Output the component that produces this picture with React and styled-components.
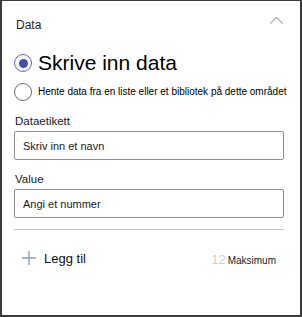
import React, { useState } from 'react'
import styled, { createGlobalStyle } from 'styled-components'

const GlobalStyle = createGlobalStyle`
  html, body {
    margin: 0;
    padding: 0;
    background: #ffffff;
  }
  body {
    font-family: "Liberation Sans", Arial, sans-serif;
    color: #000000;
  }
`

export default function App() {
  const [mode, setMode] = useState('manual')

  return (
    <>
      <GlobalStyle />
      <Panel>
        <Header>
          <Title>Data</Title>
          <Chevron viewBox="0 0 16 10" aria-hidden="true">
            <path d="M1 8.5 L8 1.5 L15 8.5" fill="none" stroke="#a6a6a6" strokeWidth="1.2" />
          </Chevron>
        </Header>

        <Options>
          <OptionRow onClick={() => setMode('manual')}>
            <Radio checked={mode === 'manual'} />
            <OptionLabel size="21px">Skrive inn data</OptionLabel>
          </OptionRow>
          <OptionRow onClick={() => setMode('list')}>
            <Radio checked={mode === 'list'} />
            <OptionLabel size="10px">Hente data fra en liste eller et bibliotek på dette området</OptionLabel>
          </OptionRow>
        </Options>

        <Field>
          <FieldLabel>Dataetikett</FieldLabel>
          <TextInput placeholder="Skriv inn et navn" />
        </Field>
        <Field>
          <FieldLabel>Value</FieldLabel>
          <TextInput placeholder="Angi et nummer" />
        </Field>

        <Divider />

        <Footer>
          <AddButton>
            <PlusIcon viewBox="0 0 14 14" aria-hidden="true">
              <path d="M7 0 V14 M0 7 H14" stroke="#8c95c9" strokeWidth="1.3" />
            </PlusIcon>
            <span>Legg til</span>
          </AddButton>
          <Limit>
            <LimitCount>12</LimitCount>
            <LimitText>Maksimum</LimitText>
          </Limit>
        </Footer>
      </Panel>
    </>
  )
}

const Panel = styled.div`
  width: 302px;
  height: 317px;
  box-sizing: border-box;
  border-style: solid;
  border-color: #3b3b3b;
  border-width: 1px 2px 2px 2px;
  padding: 0 16px 0 12px;
  display: flex;
  flex-direction: column;
`

const Header = styled.div`
  display: flex;
  justify-content: space-between;
  align-items: center;
  height: 48px;
  padding-left: 2px;
`

const Title = styled.div`
  font-size: 12px;
  color: #1f1f1f;
`

const Chevron = styled.svg`
  width: 15px;
  height: 9px;
  margin-right: 0;
  margin-top: -10px;
`

const Options = styled.div`
  display: flex;
  flex-direction: column;
  gap: 7px;
  margin-top: 1px;
  margin-bottom: 14px;
`

const OptionRow = styled.label`
  display: flex;
  align-items: center;
  gap: 6px;
  cursor: pointer;
`

const Radio = styled.span`
  width: 18px;
  height: 18px;
  box-sizing: border-box;
  flex-shrink: 0;
  border-radius: 50%;
  border: 1.5px solid ${(props) => (props.checked ? '#5a69c4' : '#6b6b6b')};
  display: flex;
  align-items: center;
  justify-content: center;

  &::after {
    content: '';
    width: 9px;
    height: 9px;
    border-radius: 50%;
    background: ${(props) => (props.checked ? '#3d4fb2' : 'transparent')};
  }
`

const OptionLabel = styled.span`
  font-size: ${(props) => props.size};
  line-height: 1.25;
  color: #000000;
  white-space: nowrap;
`

const Field = styled.div`
  display: flex;
  flex-direction: column;
  gap: 4px;
  margin-bottom: 13px;
`

const FieldLabel = styled.div`
  font-size: 11.5px;
  color: #1a1a1a;
  padding-left: 1px;
`

const TextInput = styled.input`
  height: 29px;
  box-sizing: border-box;
  border: 1px solid #8f8f8f;
  border-radius: 2px;
  padding: 0 8px;
  font-family: "Liberation Sans", Arial, sans-serif;
  font-size: 11px;
  outline: none;

  &::placeholder {
    color: #1a1a1a;
    opacity: 1;
  }
`

const Divider = styled.div`
  height: 1px;
  background: #c6c6c6;
  margin-top: -2px;
`

const Footer = styled.div`
  display: flex;
  justify-content: space-between;
  align-items: center;
  padding: 19px 8px 0 8px;
`

const AddButton = styled.div`
  display: flex;
  align-items: center;
  gap: 8px;
  font-size: 13px;
  color: #111111;
`

const PlusIcon = styled.svg`
  width: 14px;
  height: 14px;
`

const Limit = styled.div`
  display: flex;
  align-items: baseline;
  gap: 2px;
  margin-top: 3px;
`

const LimitCount = styled.span`
  font-size: 13px;
  color: #cfcfcf;
`

const LimitText = styled.span`
  font-size: 10px;
  color: #1a1a1a;
`
